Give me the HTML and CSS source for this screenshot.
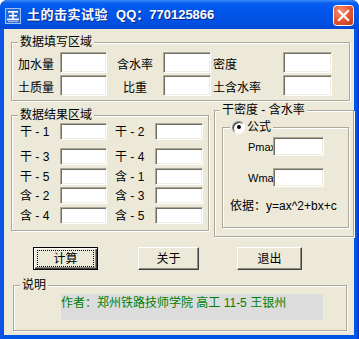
FILE: index.html
```html
<!DOCTYPE html>
<html>
<head>
<meta charset="utf-8">
<link rel="stylesheet" href="styles.css">
</head>
<body>
<div class="window">
  <div class="titlebar">
    <svg class="appicon" width="16" height="16" viewBox="0 0 16 16">
      <rect x="0.5" y="0.5" width="15" height="15" fill="#2a6ad8" stroke="#9cc2f2"/>
      <rect x="3" y="3" width="10" height="1.6" fill="#fff"/>
      <rect x="4" y="7" width="8" height="1.5" fill="#fff"/>
      <rect x="2" y="10.6" width="12" height="1.6" fill="#fff"/>
      <rect x="7.2" y="3" width="1.6" height="8" fill="#fff"/>
      <rect x="3" y="13.2" width="10" height="0.8" fill="#bcd6f8"/>
    </svg>
    <span class="title"><span class="title-cjk">土的击实试验</span><span class="title-qq">QQ：770125866</span></span>
    <span class="close">
      <svg width="21" height="21" viewBox="0 0 21 21">
        <defs>
          <radialGradient id="cg" cx="0.35" cy="0.3" r="0.9">
            <stop offset="0" stop-color="#f49272"/>
            <stop offset="0.55" stop-color="#e2552f"/>
            <stop offset="1" stop-color="#c23a1a"/>
          </radialGradient>
        </defs>
        <rect x="0.5" y="0.5" width="20" height="20" rx="3" fill="url(#cg)" stroke="#fff"/>
        <path d="M6 6 L15 15 M15 6 L6 15" stroke="#fff" stroke-width="2.2" stroke-linecap="square"/>
      </svg>
    </span>
  </div>
  <div class="client">
    <fieldset class="group g1">
      <legend>数据填写区域</legend>
      <div class="grid1">
        <span class="lbl c1">加水量</span><span class="edit"></span>
        <span class="lbl c3">含水率</span><span class="edit"></span>
        <span class="lbl c5">密度</span><span class="edit"></span>
        <span class="lbl c1">土质量</span><span class="edit"></span>
        <span class="lbl c3">比重</span><span class="edit"></span>
        <span class="lbl c5">土含水率</span><span class="edit"></span>
      </div>
    </fieldset>
    <div class="midrow">
      <fieldset class="group g2">
        <legend>数据结果区域</legend>
        <div class="grid2">
          <span class="lbl2 c1">干 - 1</span><span class="edit"></span>
          <span class="lbl2 c3">干 - 2</span><span class="edit"></span>
          <span class="lbl2 c1">干 - 3</span><span class="edit"></span>
          <span class="lbl2 c3">干 - 4</span><span class="edit"></span>
          <span class="lbl2 c1">干 - 5</span><span class="edit"></span>
          <span class="lbl2 c3">含 - 1</span><span class="edit"></span>
          <span class="lbl2 c1">含 - 2</span><span class="edit"></span>
          <span class="lbl2 c3">含 - 3</span><span class="edit"></span>
          <span class="lbl2 c1">含 - 4</span><span class="edit"></span>
          <span class="lbl2 c3">含 - 5</span><span class="edit"></span>
        </div>
      </fieldset>
      <fieldset class="group g3">
        <legend>干密度 - 含水率</legend>
        <fieldset class="group g3in">
          <legend class="radio-legend"><span class="radio"></span>公式</legend>
          <div class="frow frow1"><span class="flabel">Pmax</span><span class="edit fedit"></span></div>
          <div class="frow frow2"><span class="flabel">Wmax</span><span class="edit fedit"></span></div>
          <div class="basis">依据：y=ax^2+bx+c</div>
        </fieldset>
      </fieldset>
    </div>
    <div class="buttons">
      <span class="btn btn-default"><span class="focus">计算</span></span>
      <span class="btn btn-about">关于</span>
      <span class="btn btn-exit">退出</span>
    </div>
    <fieldset class="group g4">
      <legend>说明</legend>
      <div class="note">作者：郑州铁路技师学院 高工 11-5 王银州</div>
    </fieldset>
  </div>
</div>
</body>
</html>
```

FILE: styles.css
```css
html, body {
  margin: 0;
  padding: 0;
  background: #ffffff;
}
body {
  font: 12px/16px "Liberation Sans", "Noto Sans CJK SC", sans-serif;
  color: #000;
}
.window {
  width: 359px;
  height: 339px;
  background: linear-gradient(to right, #0831d9 0, #166aee 1px, #0055e5 2px, #0055e5 357px, #0831d9 358px);
  border-radius: 7px 7px 0 0;
  display: flex;
  flex-direction: column;
  overflow: hidden;
}
.titlebar {
  height: 29px;
  flex: none;
  display: flex;
  align-items: center;
  padding: 0 5px 0 5px;
  background: linear-gradient(#3d8cf6 0, #0a5ff0 3px, #0058ee 8px, #0054e8 50%, #0050e2 80%, #0047d6 100%);
  color: #fff;
  border-radius: 7px 7px 0 0;
}
.appicon {
  flex: none;
  margin-top: 2px;
}
.title {
  margin-left: 6px;
  font-weight: bold;
  font-size: 13px;
  line-height: 16px;
  text-shadow: 1px 1px 0 #0a2a8a;
  white-space: nowrap;
  margin-top: 1px;
}
.title-cjk {
  letter-spacing: 0.5px;
}
.title-qq {
  margin-left: 8px;
}
.close {
  margin-left: auto;
  width: 21px;
  height: 21px;
  margin-top: 2px;
  display: flex;
}
.client {
  flex: 1;
  margin: 0 5px 4px 4px;
  background: #ece9d8;
  display: flex;
  flex-direction: column;
}
.group {
  margin: 0;
  padding: 0;
  border: 1px solid #aca899;
  box-shadow: 1px 1px 0 #fff, inset 1px 1px 0 #fff;
  min-width: 0;
  box-sizing: border-box;
}
.group > legend {
  padding: 0 2px;
  line-height: 16px;
  background: #ece9d8;
}
.g1 {
  margin: 5px 0 0 7px;
  width: 339px;
  padding: 2px 0 4px 6px;
}
.grid1 {
  display: grid;
  grid-template-columns: 42px 47px 56px 48px 72px 49px;
  grid-template-rows: 21px 21px;
  row-gap: 2px;
}
.lbl {
  align-self: end;
  line-height: 16px;
  white-space: nowrap;
}
.lbl.c3 {
  text-align: center;
}
.lbl.c5 {
  padding-left: 2px;
}
.edit {
  display: block;
  background: #fff;
  border: 1px solid;
  border-color: #aca899 #fff #fff #aca899;
  box-shadow: inset 1px 1px 0 #716f64, inset -1px -1px 0 #f1efe2;
  box-sizing: border-box;
}
.midrow {
  display: flex;
  align-items: flex-start;
  margin-top: 1px;
}
.g2 {
  margin: 5px 0 0 7px;
  width: 198px;
  padding: 0 0 6px 6px;
}
.grid2 {
  display: grid;
  grid-template-columns: 42px 47px 48px 48px;
  grid-template-rows: 25px 20px 19px 20px 17px;
  align-items: start;
}
.grid2 .edit {
  height: 17px;
}
.lbl2 {
  line-height: 17px;
  white-space: nowrap;
  padding-top: 1px;
}
.lbl2.c1 {
  padding-left: 2px;
}
.lbl2.c3 {
  padding-left: 8px;
}
.g3 {
  margin: 0 0 0 5px;
  width: 140px;
  padding: 1px 4px 8px 5px;
}
.g3in {
  margin-left: 2px;
  padding: 0 0 13px 7px;
}
.radio-legend {
  display: flex;
  align-items: center;
}
.radio {
  width: 13px;
  height: 13px;
  box-sizing: border-box;
  border-radius: 50%;
  background: #fff;
  border: 1px solid;
  border-color: #808080 #fff #fff #808080;
  box-shadow: inset 1px 1px 0 #404040;
  margin-right: 2px;
  display: flex;
  align-items: center;
  justify-content: center;
}
.radio::after {
  content: "";
  width: 4px;
  height: 4px;
  border-radius: 50%;
  background: #000;
}
.frow {
  display: flex;
  align-items: center;
}
.frow1 {
  margin-top: 2px;
}
.frow2 {
  margin-top: 12px;
}
.flabel {
  margin-left: 18px;
  width: 25px;
  overflow: hidden;
  white-space: nowrap;
  font-size: 11px;
}
.fedit {
  width: 51px;
  height: 19px;
}
.basis {
  margin-top: 11px;
  white-space: nowrap;
}
.buttons {
  display: flex;
  margin-top: 10px;
  padding-left: 29px;
}
.btn {
  height: 23px;
  box-sizing: border-box;
  display: flex;
  align-items: center;
  justify-content: center;
  background: #ece9d8;
  border: 1px solid;
  border-color: #fff #404040 #404040 #fff;
  box-shadow: inset -1px -1px 0 #8f8c80;
}
.btn-default {
  width: 65px;
  border-color: #000;
  box-shadow: inset 1px 1px 0 #fff, inset -1px -1px 0 #404040, inset -2px -2px 0 #8f8c80;
  padding: 2px 3px;
  align-items: stretch;
}
.focus {
  flex: 1;
  border: 1px dotted #000;
  display: flex;
  align-items: center;
  justify-content: center;
}
.btn-about {
  width: 61px;
  margin-left: 40px;
}
.btn-exit {
  width: 65px;
  margin-left: 38px;
}
.g4 {
  margin: 7px 0 0 9px;
  width: 334px;
  padding: 1px 0 10px 6px;
}
.note {
  margin-left: 41px;
  width: 262px;
  height: 26px;
  box-sizing: border-box;
  padding-top: 1px;
  background: #dcdcdc;
  color: #008000;
  white-space: nowrap;
}
```
